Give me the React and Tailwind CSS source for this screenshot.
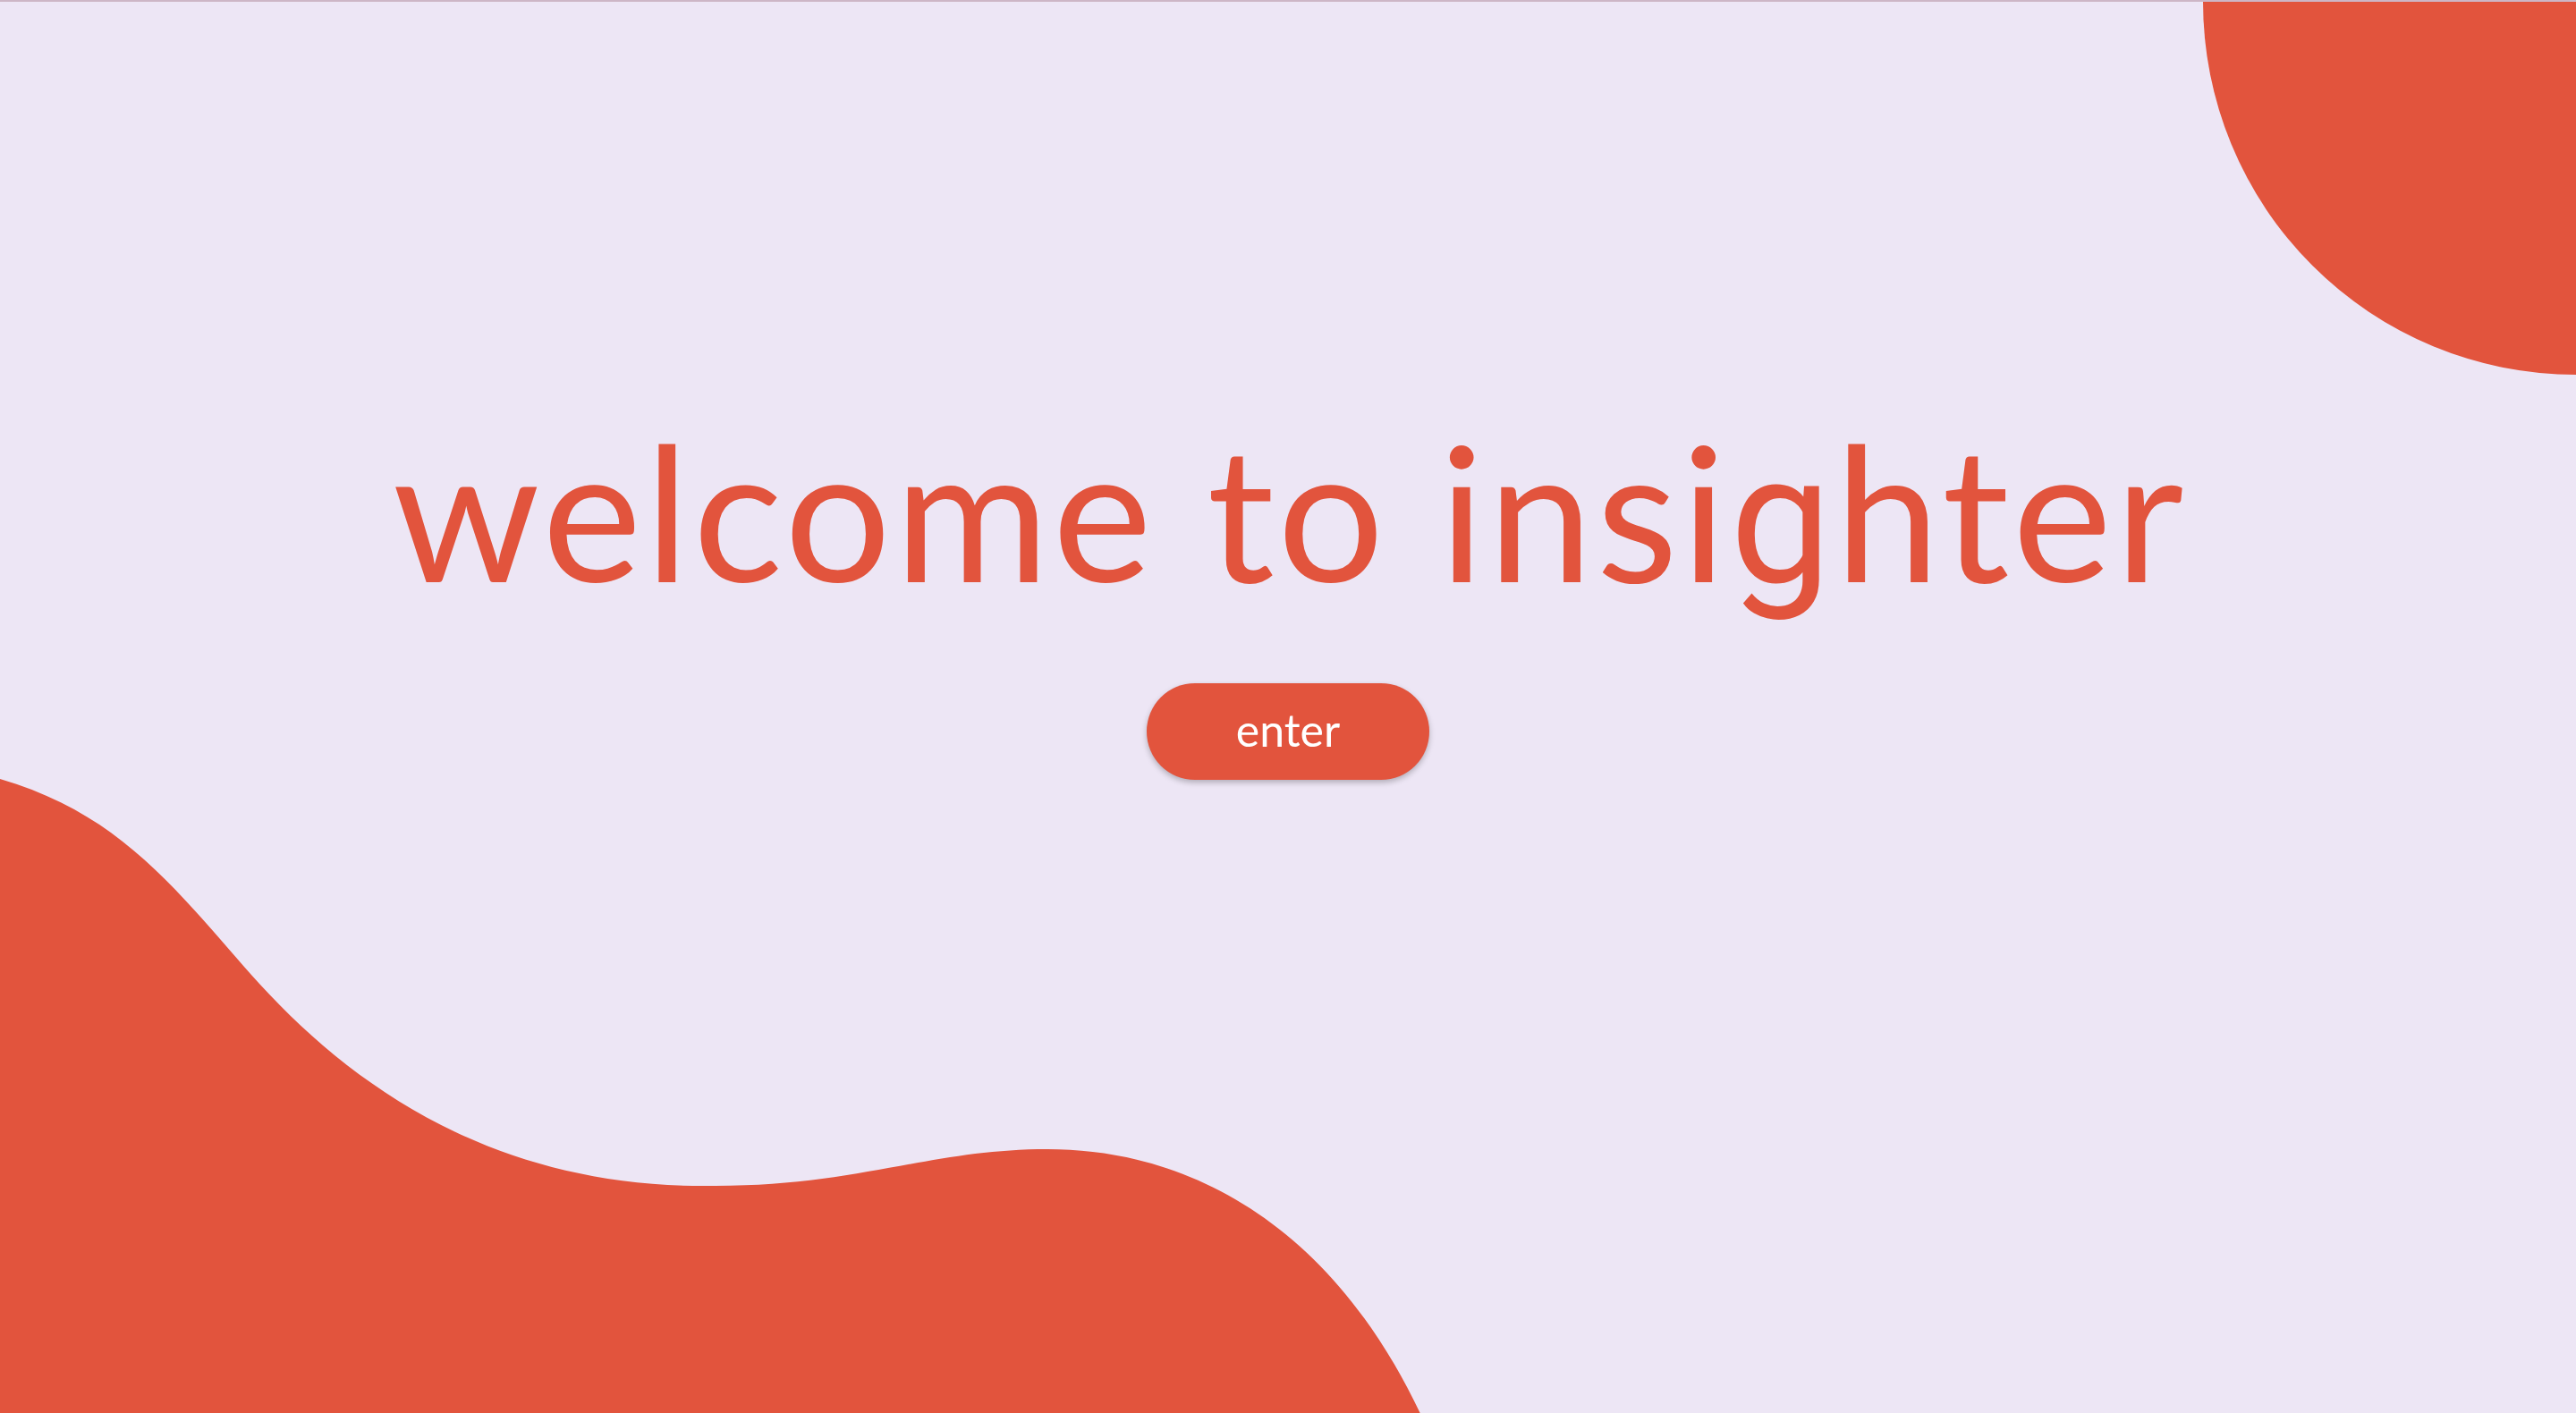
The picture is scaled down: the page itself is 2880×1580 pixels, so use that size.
export default function App() {
  return (
    <div className="relative h-[1580px] w-full overflow-hidden border-t-2 border-[#cdb6c6] bg-[#ede6f5] font-['Lato',sans-serif]">
      <div className="absolute right-0 top-0 h-[417px] w-[417px] rounded-bl-full bg-[#e2543d]" />
      <svg
        className="absolute bottom-0 left-0"
        width="1600"
        height="710"
        viewBox="0 870 1600 710"
        aria-hidden="true"
      >
        <path
          d="M0 871 C 140 912 200 1000 290 1100 C 400 1220 560 1330 800 1326 C 960 1326 1040 1285 1171 1285 C 1330 1285 1490 1370 1590 1585 L 0 1585 Z"
          fill="#e2543d"
        />
      </svg>
      <div className="relative z-10 flex flex-col items-center pt-[463px]">
        <h1 className="h-[210px] pl-[4px] text-[210px] font-normal leading-none tracking-[4px] text-[#e2543d]">
          welcome to insi<span className="font-['Roboto',sans-serif] text-[202px]">g</span>hter
        </h1>
        <button className="mt-[89px] flex h-[108px] w-[316px] items-center justify-center rounded-full bg-[#e2543d] text-[50px] leading-none text-white shadow-[0_3px_6px_rgba(0,0,0,0.25)]">
          <span className="-mt-[4px]">enter</span>
        </button>
      </div>
    </div>
  );
}
